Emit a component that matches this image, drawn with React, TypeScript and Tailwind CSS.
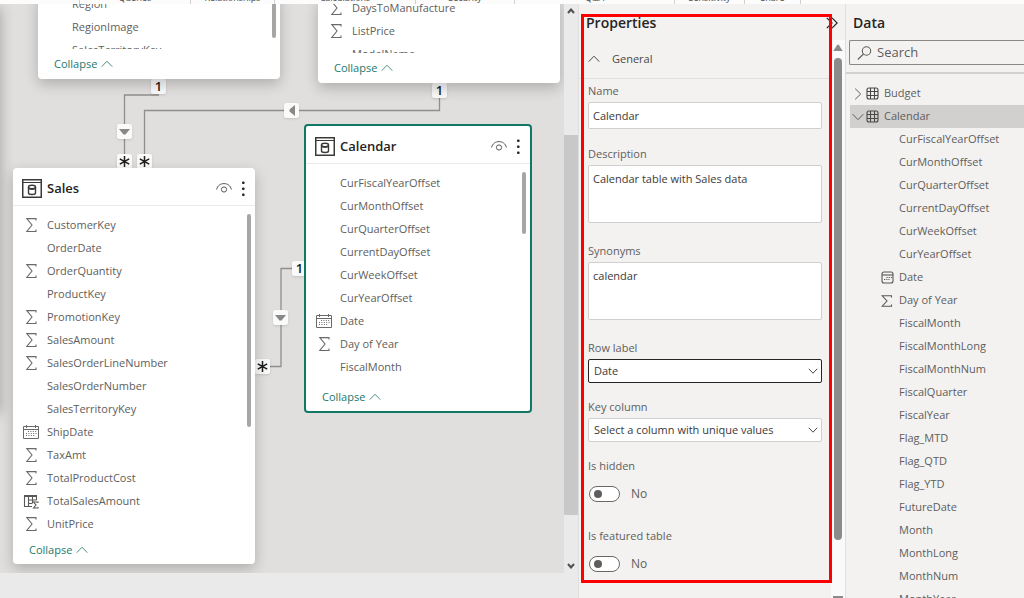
import type { ReactNode } from "react";

type IconKind = "sum" | "calendar" | "calc";
type Field = { name: string; icon?: IconKind };

const ribbonGroups = [
  { label: "", width: "w-20" },
  { label: "Queries", width: "w-[111px]" },
  { label: "Relationships", width: "w-[84px]" },
  { label: "Calculations", width: "w-[141px]" },
  { label: "Security", width: "w-[99px]" },
  { label: "Q&A", width: "w-40" },
  { label: "Sensitivity", width: "w-[70px]" },
  { label: "Share", width: "w-14" },
];

const territoryFields: Field[] = [{ name: "Region" }, { name: "RegionImage" }, { name: "SalesTerritoryKey" }];

const productFields: Field[] = [
  { name: "DaysToManufacture", icon: "sum" },
  { name: "ListPrice", icon: "sum" },
  { name: "ModelName" },
];

const salesFields: Field[] = [
  { name: "CustomerKey", icon: "sum" },
  { name: "OrderDate" },
  { name: "OrderQuantity", icon: "sum" },
  { name: "ProductKey" },
  { name: "PromotionKey", icon: "sum" },
  { name: "SalesAmount", icon: "sum" },
  { name: "SalesOrderLineNumber", icon: "sum" },
  { name: "SalesOrderNumber" },
  { name: "SalesTerritoryKey" },
  { name: "ShipDate", icon: "calendar" },
  { name: "TaxAmt", icon: "sum" },
  { name: "TotalProductCost", icon: "sum" },
  { name: "TotalSalesAmount", icon: "calc" },
  { name: "UnitPrice", icon: "sum" },
];

const calendarFields: Field[] = [
  { name: "CurFiscalYearOffset" },
  { name: "CurMonthOffset" },
  { name: "CurQuarterOffset" },
  { name: "CurrentDayOffset" },
  { name: "CurWeekOffset" },
  { name: "CurYearOffset" },
  { name: "Date", icon: "calendar" },
  { name: "Day of Year", icon: "sum" },
  { name: "FiscalMonth" },
];

const treeFields: Field[] = [
  ...calendarFields,
  { name: "FiscalMonthLong" },
  { name: "FiscalMonthNum" },
  { name: "FiscalQuarter" },
  { name: "FiscalYear" },
  { name: "Flag_MTD" },
  { name: "Flag_QTD" },
  { name: "Flag_YTD" },
  { name: "FutureDate" },
  { name: "Month" },
  { name: "MonthLong" },
  { name: "MonthNum" },
  { name: "MonthYear" },
];

function SumIcon() {
  return (
    <svg width="16" height="16" viewBox="0 0 16 16" fill="none" stroke="#6b6967" strokeWidth="1.1">
      <path d="M13 2.5V.6H3.800L9 7l-5.200 6.500H13v-1.900" />
    </svg>
  );
}

function SmallSumIcon() {
  return (
    <svg width="12" height="12" viewBox="0 0 12 12" fill="none" stroke="#5a5856" strokeWidth="1.1">
      <path d="M10.500 2.500V.8H1.200L6 6l-4.800 5.200h9.300V9.500" />
    </svg>
  );
}

function CalendarIcon() {
  return (
    <svg width="16" height="16" viewBox="0 0 16 16" fill="none" stroke="#6b6967">
      <path d="M.5 1.500h15v12H.5zM.5 4.500h15M3.500 0v3M12.500 0v3" />
      <path d="M5 6.500h9M3 8.500h11M3 10.500h9" strokeDasharray="1 1.4" />
    </svg>
  );
}

function CalcIcon() {
  return (
    <svg width="16" height="16" viewBox="0 0 16 16" fill="none" stroke="#5a5856" strokeWidth="1.1">
      <path d="M9 12.500H1.500v-11h12V6M1.500 2.500h12M5.500 3v9.500M9.500 3v6M5.500 6h8M5.500 9.500h4" />
      <path d="M15 9V8h-4.500l2.500 3-2.500 3H15v-1" />
    </svg>
  );
}

function SmallCalendarIcon() {
  return (
    <svg width="13" height="13" viewBox="0 0 13 13" fill="none" stroke="#5a5856" strokeWidth="1.1">
      <rect x="1" y="1" width="11" height="11" rx="2" />
      <path d="M1 4h11" />
      <path d="M5.500 6.500H11M3 8.500h5.500" strokeDasharray="1.200 1" />
    </svg>
  );
}

function fieldIcon(kind?: IconKind) {
  if (kind === "sum") return <SumIcon />;
  if (kind === "calendar") return <CalendarIcon />;
  if (kind === "calc") return <CalcIcon />;
  return null;
}

function TableIcon() {
  return (
    <svg width="20" height="19" viewBox="0 0 20 19" fill="none" stroke="#3b3a39">
      <rect x=".75" y=".75" width="18.500" height="17.500" strokeWidth="1.500" />
      <path d="M1 3.500h18" />
      <path d="M6.500 8v6c0 1 1.500 1.500 3.500 1.500s3.500-.5 3.500-1.500V8" strokeWidth="1.400" />
      <ellipse cx="10" cy="8" rx="3.500" ry="1.700" strokeWidth="1.400" />
      <path d="M6.500 9.500c1 1.200 6 1.200 7 0" />
    </svg>
  );
}

function EyeIcon() {
  return (
    <svg width="16" height="12" viewBox="0 0 16 12" fill="none" stroke="#5a5856">
      <path d="M.6 6.500C1.500 2.500 4.500.6 8 .6s6.500 1.900 7.400 5.900" />
      <circle cx="8" cy="6.500" r="2.600" />
    </svg>
  );
}

function DotsIcon() {
  return (
    <svg width="5" height="16" viewBox="0 0 5 16" fill="#252423">
      <rect x="1" y=".5" width="2.600" height="2.600" rx="1" />
      <rect x="1" y="6.500" width="2.600" height="2.600" rx="1" />
      <rect x="1" y="12.500" width="2.600" height="2.600" rx="1" />
    </svg>
  );
}

function GridIcon() {
  return (
    <svg width="13" height="13" viewBox="0 0 13 13" fill="none" stroke="#4a4846" strokeWidth="1.100">
      <rect x="1" y="1" width="11" height="11" rx="2" />
      <path d="M1 4.500h11M1 8.500h11M4.500 1v11M8.500 1v11" />
    </svg>
  );
}

function ChevronUp({ className = "" }: { className?: string }) {
  return (
    <svg className={className} width="12" height="8" viewBox="0 0 12 8" fill="none" stroke="currentColor">
      <path d="M.7 6.700 6 1.200l5.300 5.500" />
    </svg>
  );
}

function ChevronDown({ className = "" }: { className?: string }) {
  return (
    <svg className={className} width="12" height="8" viewBox="0 0 12 8" fill="none" stroke="currentColor">
      <path d="M.7 1.200 6 6.700l5.300-5.500" />
    </svg>
  );
}

type CardProps = {
  place: string;
  title?: string;
  fields: Field[];
  list?: string;
  thumb?: string;
  footer?: string;
  selected?: boolean;
};

function TableCard({ place, title, fields, list = "", thumb = "", footer = "h-7", selected }: CardProps) {
  return (
    <section
      className={`absolute ${place} rounded-sm bg-white ${
        selected ? "border-2 border-[#117865]" : "shadow-[0_5px_14px_rgba(0,0,0,0.22)]"
      }`}
    >
      {title && (
        <header className="flex h-[38px] items-center border-b border-[#edebe9] pt-1 pr-[9px] pl-[9px]">
          <TableIcon />
          <h2 className="ml-[5px] flex-1 text-[13px] font-semibold text-[#252423]">{title}</h2>
          <button aria-label={`Show or hide ${title}`} className="mr-[9px]">
            <EyeIcon />
          </button>
          <button aria-label={`${title} options`}>
            <DotsIcon />
          </button>
        </header>
      )}
      <div className={`flex items-start overflow-hidden ${list}`}>
        <ul className="flex-1">
          {fields.map((f) => (
            <li key={f.name} className="flex h-[23px] items-center gap-2 pl-[10px]">
              <span className="w-4 shrink-0">{fieldIcon(f.icon)}</span>
              {f.name}
            </li>
          ))}
        </ul>
        <div className={`mr-1 w-1 rounded-full bg-[#a6a6a6] ${thumb}`} />
      </div>
      <button className={`flex items-center gap-1 pl-4 text-[#217a6c] ${footer}`}>
        Collapse
        <ChevronUp className="text-[#4f8f85]" />
      </button>
    </section>
  );
}

function Badge({ place, children }: { place: string; children: ReactNode }) {
  return (
    <span
      className={`absolute ${place} flex size-[15px] items-center justify-center rounded-xs bg-[#fafafa] text-[13px] leading-none font-semibold text-[#201f1e] shadow-sm`}
    >
      {children}
    </span>
  );
}

function Star() {
  return (
    <svg width="11" height="11" viewBox="0 0 11 11" stroke="#201f1e" strokeWidth="1.500">
      <path d="M5.500 0v11M.8 2.800l9.400 5.400M.8 8.200l9.400-5.400" />
    </svg>
  );
}

function DownArrow() {
  return (
    <svg width="11" height="6" viewBox="0 0 11 6" fill="#8a8886">
      <path d="M0 0h11L6.500 5.500h-2z" />
    </svg>
  );
}

function LeftArrow() {
  return (
    <svg width="6" height="11" viewBox="0 0 6 11" fill="#8a8886">
      <path d="M6 0v11L.5 6.500v-2z" />
    </svg>
  );
}

function Canvas() {
  return (
    <main className="flex min-w-0 flex-1 flex-col bg-[#eaeaea]">
      <div className="mb-[25px] flex min-h-0 flex-1">
        <div className="relative min-w-0 flex-1 overflow-hidden bg-[#e0dfdd]">
          <div className="absolute top-0 -left-5 h-[405px] w-5 shadow-[0_4px_14px_rgba(0,0,0,0.28)]" />
          <svg className="absolute top-0 left-0" width="564" height="420" fill="none" stroke="#8f8e8d" strokeWidth="1.300">
            <path d="M159 91h-34.500v70" />
            <path d="M144.500 160v-53.500h295V88" />
            <path d="M262 362.500h19v-98h19" />
          </svg>
          <Badge place="top-[75px] left-[151px]">1</Badge>
          <Badge place="top-[120px] left-[117px]"><DownArrow /></Badge>
          <Badge place="top-[150px] left-[117px]"><Star /></Badge>
          <Badge place="top-[150px] left-[137px]"><Star /></Badge>
          <Badge place="top-[99px] left-[284px]"><LeftArrow /></Badge>
          <Badge place="top-[79px] left-[432px]">1</Badge>
          <Badge place="top-[257px] left-[292px]">1</Badge>
          <Badge place="top-[306px] left-[273px]"><DownArrow /></Badge>
          <Badge place="top-[355px] left-[255px]"><Star /></Badge>
          <TableCard
            place="-top-[11px] left-[38px] w-[242px]"
            fields={territoryFields}
            list="h-14"
            thumb="h-[45px]"
            footer="h-[30px]"
          />
          <TableCard place="-top-[7px] left-[318px] w-[242px]" fields={productFields} list="h-14" footer="h-[30px]" />
          <TableCard
            place="top-[164px] left-[13px] w-[242px]"
            title="Sales"
            fields={salesFields}
            list="pt-2"
            thumb="h-[213px]"
          />
          <TableCard
            place="top-[120px] left-[304px] w-[228px]"
            title="Calendar"
            fields={calendarFields}
            list="pt-2 pb-1"
            thumb="h-[62px]"
            selected
          />
        </div>
        <div className="flex w-[14px] flex-col items-center text-[#505050]">
          <svg className="mt-1" width="8" height="6" viewBox="0 0 8 6" fill="none" stroke="currentColor" strokeWidth="2">
            <path d="m1 5 3-3.500L7 5" />
          </svg>
          <div className="mt-[121px] h-[380px] w-full bg-[#c8c8c8]" />
          <svg className="mt-auto mb-1" width="8" height="6" viewBox="0 0 8 6" fill="none" stroke="currentColor" strokeWidth="2">
            <path d="m1 1 3 3.500L7 1" />
          </svg>
        </div>
      </div>
    </main>
  );
}

const boxStyle = "block w-full rounded-xs border bg-white text-[11px] text-[#3b3a39] outline-none";

function FieldGroup({ id, label, gap, children }: { id: string; label: string; gap: string; children: ReactNode }) {
  return (
    <div className={gap}>
      <label htmlFor={id} className="block h-[19px] leading-4">
        {label}
      </label>
      {children}
    </div>
  );
}

function Dropdown({ id, value, border }: { id: string; value: string; border: string }) {
  return (
    <div className="relative">
      <select id={id} className={`${boxStyle} h-6 appearance-none pl-[5px] ${border}`}>
        <option>{value}</option>
      </select>
      <svg
        className="pointer-events-none absolute top-2 right-1 text-[#4a4846]"
        width="10"
        height="8"
        viewBox="0 0 10 8"
        fill="none"
        stroke="currentColor"
      >
        <path d="M.8 1.800 5 6.200l4.200-4.400" />
      </svg>
    </div>
  );
}

function Toggle({ id }: { id: string }) {
  return (
    <div className="flex h-4 items-center gap-[11px] pl-px">
      <input
        id={id}
        type="checkbox"
        className="flex h-4 w-[31px] appearance-none items-center rounded-full border border-[#6b6967] bg-white pl-1 before:size-2 before:rounded-full before:bg-[#605e5c]"
      />
      <span className="text-xs">No</span>
    </div>
  );
}

function Properties() {
  return (
    <aside className="relative flex w-[268px] shrink-0 flex-col border-x border-[#e1dfdd] bg-[#f3f2f1]">
      <header className="flex h-9 shrink-0 items-center justify-between pt-px pr-[7px] pl-[7px]">
        <h2 className="text-sm font-semibold text-[#252423]">Properties</h2>
        <button aria-label="Collapse properties pane">
          <svg width="12" height="12" viewBox="0 0 12 12" fill="none" stroke="#252423" strokeWidth="1.200">
            <path d="m.8.8 5.200 5.200-5.200 5.200M6 .8 11.200 6 6 11.200" />
          </svg>
        </button>
      </header>
      <div className="flex min-h-0 flex-1">
        <div className="min-w-0 flex-1 overflow-hidden">
          <button className="flex h-[39px] w-full items-center gap-3 border-b border-[#e1dfdd] pl-[9px] text-[#4a4846]">
            <ChevronUp />
            General
          </button>
          <form className="pt-1 pr-[9px] pl-[9px]">
            <FieldGroup id="name" label="Name" gap="mb-[17px]">
              <input id="name" defaultValue="Calendar" className={`${boxStyle} h-[27px] border-[#d2d0ce] px-1`} />
            </FieldGroup>
            <FieldGroup id="description" label="Description" gap="mb-5">
              <textarea
                id="description"
                defaultValue="Calendar table with Sales data"
                className={`${boxStyle} h-[58px] resize-none border-[#d2d0ce] px-1 py-[5px] leading-4`}
              />
            </FieldGroup>
            <FieldGroup id="synonyms" label="Synonyms" gap="mb-5">
              <textarea
                id="synonyms"
                defaultValue="calendar"
                className={`${boxStyle} h-[58px] resize-none border-[#d2d0ce] px-1 py-[5px] leading-4`}
              />
            </FieldGroup>
            <FieldGroup id="row-label" label="Row label" gap="mb-4">
              <Dropdown id="row-label" value="Date" border="border-[#252423]" />
            </FieldGroup>
            <FieldGroup id="key-column" label="Key column" gap="mb-4">
              <Dropdown id="key-column" value="Select a column with unique values" border="border-[#d2d0ce]" />
            </FieldGroup>
            <FieldGroup id="is-hidden" label="Is hidden" gap="mb-[26px]">
              <div className="pt-[9px]">
                <Toggle id="is-hidden" />
              </div>
            </FieldGroup>
            <FieldGroup id="is-featured" label="Is featured table" gap="">
              <div className="pt-[9px]">
                <Toggle id="is-featured" />
              </div>
            </FieldGroup>
          </form>
        </div>
        <div className="flex w-[14px] shrink-0 flex-col items-center bg-[#fafafa]">
          <svg className="mt-1" width="10" height="8" viewBox="0 0 10 8" fill="#8b8b8b">
            <path d="M4 1.200q1-1.200 2 0L9.700 7H.3z" />
          </svg>
          <div className="mt-[6px] h-[482px] w-2 rounded-full bg-[#8b8b8b]" />
          <div className="mt-auto h-[2px] w-[10px] bg-[#8b8b8b]" />
        </div>
      </div>
      <div className="pointer-events-none absolute top-[10px] left-[2px] h-[569px] w-[251px] border-3 border-[#fe0000]" />
    </aside>
  );
}

function DataPane() {
  return (
    <aside className="w-[178px] shrink-0 overflow-hidden bg-[#f3f2f1]">
      <h2 className="flex h-9 items-center pt-px pl-[7px] text-sm font-semibold text-[#252423]">Data</h2>
      <div className="border-b-2 border-[#d2d0ce] pb-[7px] pl-[3px]">
        <label className="flex h-[25px] items-center gap-[5px] rounded-l-xs border border-r-0 border-[#8a8886] pl-[7px]">
          <svg className="shrink-0" width="15" height="14" viewBox="0 0 15 14" fill="none" stroke="#605e5c" strokeWidth="1.100">
            <circle cx="9.500" cy="5" r="4.200" />
            <path d="M6.500 8 .8 13.500" />
          </svg>
          <input
            type="search"
            aria-label="Search"
            placeholder="Search"
            className="w-full bg-transparent text-[13px] outline-none placeholder:text-[#605e5c]"
          />
        </label>
      </div>
      <ul className="mt-2 ml-1">
        <li className="flex h-[23px] items-center pl-1">
          <svg className="mr-1" width="8" height="12" viewBox="0 0 8 12" fill="none" stroke="#605e5c">
            <path d="M1.200.7 6.700 6l-5.500 5.300" />
          </svg>
          <GridIcon />
          <span className="ml-[5px]">Budget</span>
        </li>
        <li>
          <div className="flex h-[23px] items-center bg-[#d2d0ce] pl-[2px]">
            <ChevronDown className="mr-[2px]" />
            <GridIcon />
            <span className="ml-[5px]">Calendar</span>
          </div>
          <ul>
            {treeFields.map((f) => (
              <li key={f.name} className="flex h-[23px] items-center">
                <span className="mr-1 ml-[29px] flex w-4 shrink-0 justify-center">
                  {f.icon === "calendar" ? <SmallCalendarIcon /> : f.icon === "sum" ? <SmallSumIcon /> : null}
                </span>
                {f.name}
              </li>
            ))}
          </ul>
        </li>
      </ul>
    </aside>
  );
}

export default function App() {
  return (
    <div className="flex h-screen flex-col overflow-hidden bg-[#eaeaea] font-['Open_Sans','Noto_Sans',sans-serif] text-[11px] text-[#605e5c]">
      <div className="z-10 flex h-1 shrink-0 items-end overflow-hidden bg-[#fcfcfc] text-[9px] leading-3 text-[#484644]">
        {ribbonGroups.map((g) => (
          <div key={g.label} className={`h-3 shrink-0 border-r border-[#d2d0ce] text-center ${g.width}`}>
            {g.label}
          </div>
        ))}
      </div>
      <div className="flex min-h-0 flex-1">
        <Canvas />
        <Properties />
        <DataPane />
      </div>
    </div>
  );
}
